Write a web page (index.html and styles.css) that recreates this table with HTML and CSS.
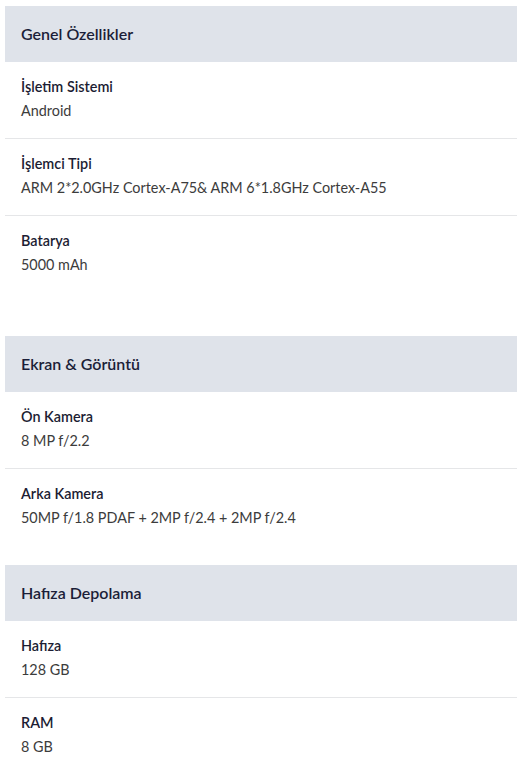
FILE: index.html
```html
<!DOCTYPE html>
<html lang="tr">
<head>
<meta charset="utf-8">
<link rel="stylesheet" href="styles.css">
</head>
<body>
<div class="specs">
  <section class="group group-first">
    <h2 class="group-title">Genel Özellikler</h2>
    <div class="row">
      <div class="label">İşletim Sistemi</div>
      <div class="value">Android</div>
    </div>
    <div class="row">
      <div class="label">İşlemci Tipi</div>
      <div class="value">ARM 2*2.0GHz Cortex-A75&amp; ARM 6*1.8GHz Cortex-A55</div>
    </div>
    <div class="row">
      <div class="label">Batarya</div>
      <div class="value">5000 mAh</div>
    </div>
  </section>
  <section class="group">
    <h2 class="group-title">Ekran &amp; Görüntü</h2>
    <div class="row">
      <div class="label">Ön Kamera</div>
      <div class="value">8 MP f/2.2</div>
    </div>
    <div class="row">
      <div class="label">Arka Kamera</div>
      <div class="value">50MP f/1.8 PDAF + 2MP f/2.4 + 2MP f/2.4</div>
    </div>
  </section>
  <section class="group">
    <h2 class="group-title">Hafıza Depolama</h2>
    <div class="row">
      <div class="label">Hafıza</div>
      <div class="value">128 GB</div>
    </div>
    <div class="row">
      <div class="label">RAM</div>
      <div class="value">8 GB</div>
    </div>
  </section>
</div>
</body>
</html>
```
FILE: styles.css
```css
html, body {
  margin: 0;
  padding: 0;
  background: #ffffff;
}
body {
  font-family: Lato, "Noto Sans", sans-serif;
  color: #1c1d33;
}
.specs {
  padding: 6px 10px 0 5px;
  display: flex;
  flex-direction: column;
}
.group {
  display: flex;
  flex-direction: column;
  margin-bottom: 20px;
}
.group-first {
  margin-bottom: 44px;
}
.group-title {
  margin: 0;
  height: 56px;
  box-sizing: border-box;
  display: flex;
  align-items: center;
  padding: 0 16px 2px;
  background: #dfe3ea;
  font-size: 16px;
  font-weight: 600;
  color: #1b1e38;
}
.row {
  padding: 13px 16px 15px;
  border-bottom: 1px solid #e5e6e8;
}
.row:last-child {
  border-bottom: none;
}
.label {
  font-size: 14.4px;
  line-height: 24px;
  font-weight: 600;
  color: #1c1d33;
}
.value {
  font-size: 14.4px;
  line-height: 24px;
  font-weight: 400;
  color: #3c3c3c;
}
```
